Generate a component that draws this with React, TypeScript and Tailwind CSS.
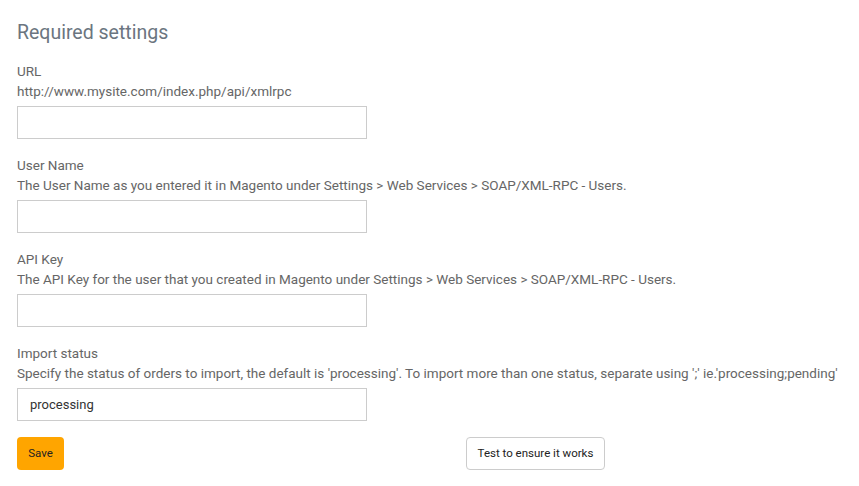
export default function App() {
  const fields = [
    {
      label: 'URL',
      help: 'http://www.mysite.com/index.php/api/xmlrpc',
      value: '',
    },
    {
      label: 'User Name',
      help: 'The User Name as you entered it in Magento under Settings > Web Services > SOAP/XML-RPC - Users.',
      value: '',
    },
    {
      label: 'API Key',
      help: 'The API Key for the user that you created in Magento under Settings > Web Services > SOAP/XML-RPC - Users.',
      value: '',
    },
    {
      label: 'Import status',
      help: "Specify the status of orders to import, the default is 'processing'. To import more than one status, separate using ';' ie.'processing;pending'",
      value: 'processing',
    },
  ];

  return (
    <div
      className="min-h-screen bg-white px-[17px] pt-[20px] text-[13.5px] text-[#666]"
      style={{ fontFamily: 'Roboto, "Noto Sans", sans-serif' }}
    >
      <h2 className="text-[19.5px] leading-[26px] text-[#6b7580]">Required settings</h2>

      <div className="mt-[15px] flex flex-col gap-[16px]">
        {fields.map((f) => (
          <div key={f.label} className="flex flex-col">
            <div className="leading-[20px]">{f.label}</div>
            <div className="leading-[20px] whitespace-nowrap">{f.help}</div>
            <input
              defaultValue={f.value}
              className="mt-[5px] h-[33px] w-[350px] border border-[#ccc] px-[12px] text-[13px] text-[#333] outline-none"
            />
          </div>
        ))}
      </div>

      <div className="mt-[16px] flex items-center">
        <button className="h-[33px] w-[47px] rounded-[4px] bg-[#ffa500] text-[11.5px] text-[#222]">
          Save
        </button>
        <button className="ml-[402px] h-[33px] w-[139px] rounded-[4px] border border-[#ccc] bg-white text-[11.5px] text-[#222]">
          Test to ensure it works
        </button>
      </div>
    </div>
  );
}
